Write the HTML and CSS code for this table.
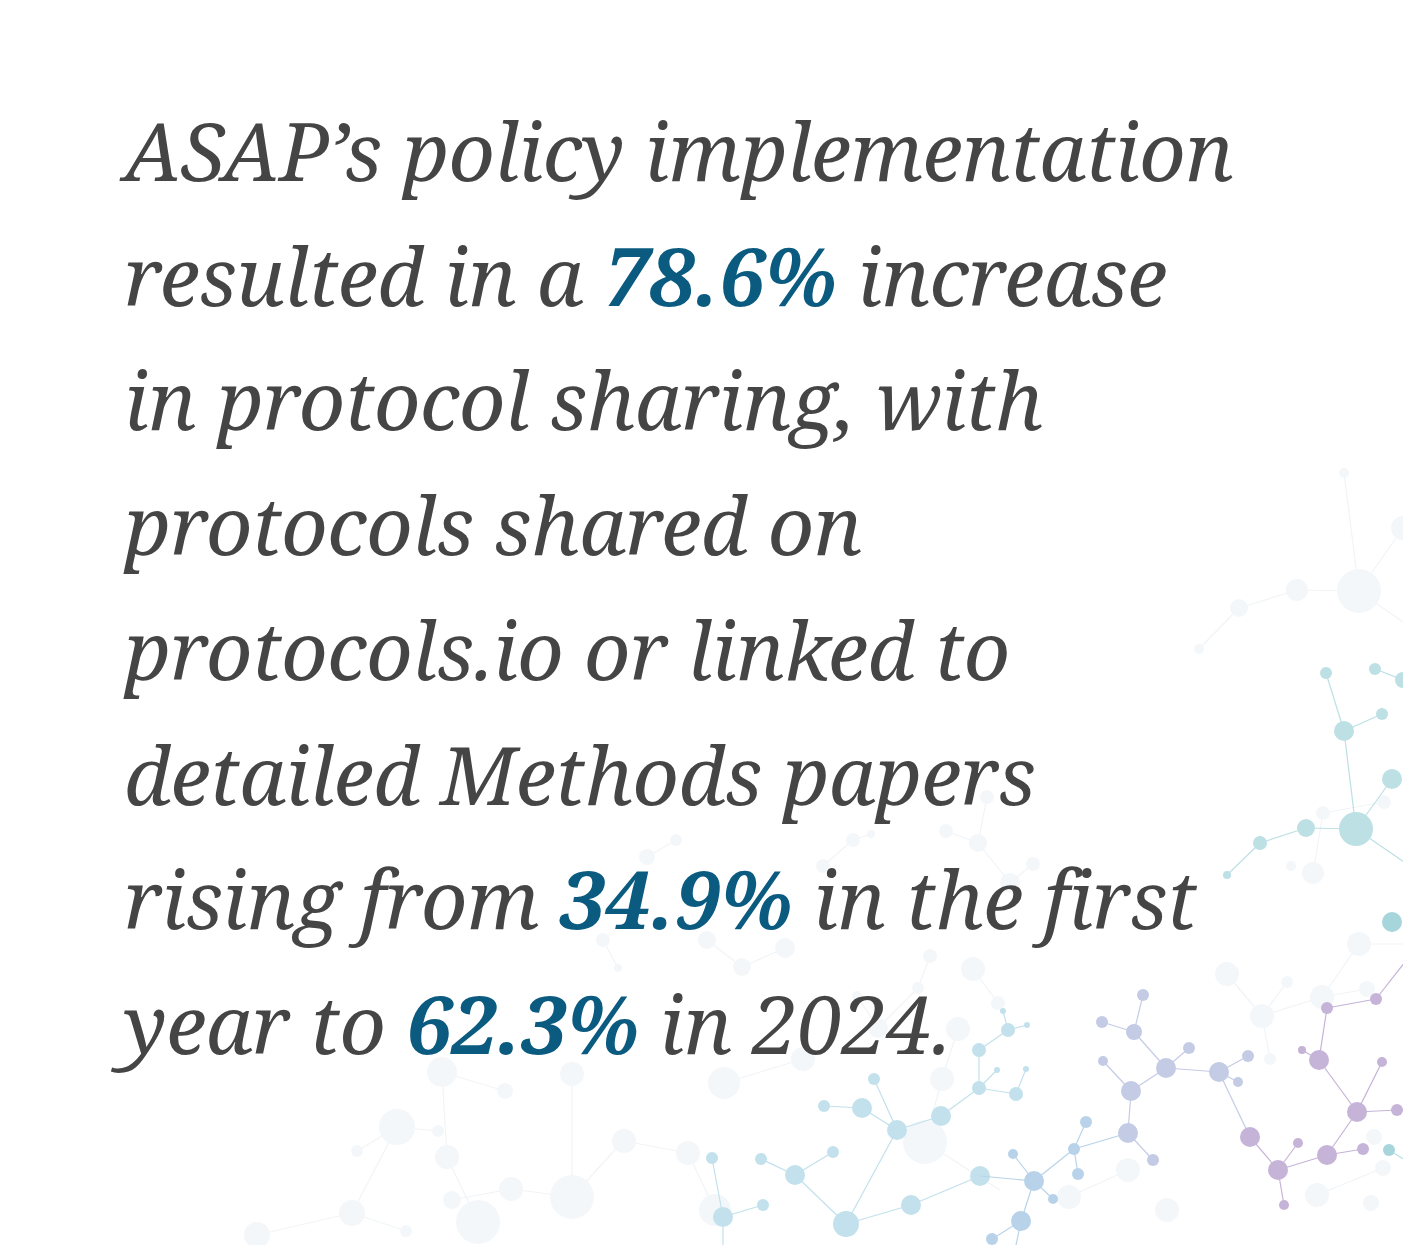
FILE: index.html
```html
<!DOCTYPE html>
<html lang="en">
<head>
<meta charset="utf-8">
<title>ASAP protocol sharing</title>
<link rel="stylesheet" href="styles.css">
</head>
<body>
<main class="card">
  <svg class="network" viewBox="0 0 1403 1245" aria-hidden="true">
    <g class="faint">
      <g class="lines">
        <line x1="1344" y1="473" x2="1359" y2="591"/>
        <line x1="1359" y1="591" x2="1403" y2="528"/>
        <line x1="1359" y1="591" x2="1297" y2="590"/>
        <line x1="1297" y1="590" x2="1239" y2="608"/>
        <line x1="1239" y1="608" x2="1199" y2="649"/>
        <line x1="1359" y1="591" x2="1403" y2="622"/>
        <line x1="987" y1="797" x2="978" y2="843"/>
        <line x1="978" y1="843" x2="946" y2="831"/>
        <line x1="978" y1="843" x2="1010" y2="883"/>
        <line x1="1010" y1="883" x2="1033" y2="864"/>
        <line x1="853" y1="840" x2="871" y2="834"/>
        <line x1="853" y1="840" x2="823" y2="866"/>
        <line x1="647" y1="857" x2="676" y2="840"/>
        <line x1="603" y1="940" x2="618" y2="968"/>
        <line x1="707" y1="940" x2="742" y2="967"/>
        <line x1="742" y1="967" x2="785" y2="948"/>
        <line x1="930" y1="956" x2="918" y2="988"/>
        <line x1="918" y1="988" x2="878" y2="1028"/>
        <line x1="878" y1="1028" x2="857" y2="996"/>
        <line x1="973" y1="969" x2="998" y2="1003"/>
        <line x1="1359" y1="944" x2="1322" y2="997"/>
        <line x1="1359" y1="944" x2="1403" y2="944"/>
        <line x1="1227" y1="974" x2="1262" y2="1016"/>
        <line x1="1262" y1="1016" x2="1287" y2="982"/>
        <line x1="1262" y1="1016" x2="1270" y2="1059"/>
        <line x1="1262" y1="1016" x2="1322" y2="997"/>
        <line x1="1322" y1="997" x2="1367" y2="989"/>
        <line x1="1323" y1="813" x2="1384" y2="802"/>
        <line x1="1323" y1="813" x2="1313" y2="873"/>
        <line x1="958" y1="1029" x2="942" y2="1079"/>
        <line x1="942" y1="1079" x2="925" y2="1142"/>
        <line x1="925" y1="1142" x2="1000" y2="1190"/>
        <line x1="803" y1="1059" x2="724" y2="1083"/>
        <line x1="624" y1="1141" x2="688" y2="1153"/>
        <line x1="688" y1="1153" x2="715" y2="1210"/>
        <line x1="397" y1="1127" x2="438" y2="1131"/>
        <line x1="397" y1="1127" x2="357" y2="1151"/>
        <line x1="397" y1="1127" x2="352" y2="1213"/>
        <line x1="352" y1="1213" x2="406" y2="1231"/>
        <line x1="352" y1="1213" x2="257" y2="1235"/>
        <line x1="442" y1="1072" x2="505" y2="1091"/>
        <line x1="442" y1="1072" x2="447" y2="1157"/>
        <line x1="447" y1="1157" x2="478" y2="1222"/>
        <line x1="572" y1="1074" x2="572" y2="1197"/>
        <line x1="572" y1="1197" x2="624" y2="1140"/>
        <line x1="572" y1="1197" x2="511" y2="1189"/>
        <line x1="511" y1="1189" x2="452" y2="1200"/>
        <line x1="1128" y1="1170" x2="1069" y2="1197"/>
        <line x1="1317" y1="1195" x2="1383" y2="1168"/>
      </g>
      <circle cx="1344" cy="473" r="5"/>
      <circle cx="1359" cy="591" r="22"/>
      <circle cx="1403" cy="528" r="12"/>
      <circle cx="1297" cy="590" r="11"/>
      <circle cx="1239" cy="608" r="9"/>
      <circle cx="1199" cy="649" r="5"/>
      <circle cx="987" cy="797" r="7"/>
      <circle cx="978" cy="843" r="9"/>
      <circle cx="946" cy="831" r="7"/>
      <circle cx="1010" cy="883" r="10"/>
      <circle cx="1033" cy="864" r="7"/>
      <circle cx="853" cy="840" r="7"/>
      <circle cx="871" cy="834" r="4"/>
      <circle cx="823" cy="866" r="7"/>
      <circle cx="647" cy="857" r="8"/>
      <circle cx="676" cy="840" r="6"/>
      <circle cx="603" cy="940" r="7"/>
      <circle cx="618" cy="968" r="4"/>
      <circle cx="707" cy="940" r="9"/>
      <circle cx="742" cy="967" r="9"/>
      <circle cx="785" cy="948" r="10"/>
      <circle cx="930" cy="956" r="7"/>
      <circle cx="918" cy="988" r="6"/>
      <circle cx="878" cy="1028" r="10"/>
      <circle cx="857" cy="996" r="5"/>
      <circle cx="973" cy="969" r="12"/>
      <circle cx="998" cy="1003" r="7"/>
      <circle cx="1359" cy="944" r="12"/>
      <circle cx="1322" cy="997" r="12"/>
      <circle cx="1227" cy="974" r="12"/>
      <circle cx="1262" cy="1016" r="12"/>
      <circle cx="1287" cy="982" r="6"/>
      <circle cx="1270" cy="1059" r="6"/>
      <circle cx="1367" cy="989" r="8"/>
      <circle cx="1323" cy="813" r="7"/>
      <circle cx="1384" cy="802" r="7"/>
      <circle cx="1313" cy="873" r="11"/>
      <circle cx="1291" cy="866" r="5"/>
      <circle cx="958" cy="1029" r="12"/>
      <circle cx="942" cy="1079" r="12"/>
      <circle cx="925" cy="1142" r="22"/>
      <circle cx="803" cy="1059" r="12"/>
      <circle cx="724" cy="1083" r="16"/>
      <circle cx="624" cy="1141" r="12"/>
      <circle cx="688" cy="1153" r="12"/>
      <circle cx="715" cy="1210" r="16"/>
      <circle cx="397" cy="1127" r="18"/>
      <circle cx="438" cy="1131" r="6"/>
      <circle cx="357" cy="1151" r="6"/>
      <circle cx="352" cy="1213" r="13"/>
      <circle cx="406" cy="1231" r="6"/>
      <circle cx="257" cy="1235" r="13"/>
      <circle cx="442" cy="1072" r="15"/>
      <circle cx="505" cy="1091" r="8"/>
      <circle cx="447" cy="1157" r="12"/>
      <circle cx="478" cy="1222" r="22"/>
      <circle cx="572" cy="1074" r="12"/>
      <circle cx="572" cy="1197" r="22"/>
      <circle cx="511" cy="1189" r="12"/>
      <circle cx="452" cy="1200" r="9"/>
      <circle cx="1128" cy="1170" r="12"/>
      <circle cx="1069" cy="1197" r="12"/>
      <circle cx="1167" cy="1210" r="12"/>
      <circle cx="1317" cy="1195" r="12"/>
      <circle cx="1371" cy="1203" r="8"/>
      <circle cx="1374" cy="1137" r="8"/>
      <circle cx="1383" cy="1168" r="8"/>
    </g>

    <g class="teal">
      <g class="lines">
        <line x1="1326" y1="673" x2="1344" y2="731"/>
        <line x1="1344" y1="731" x2="1382" y2="714"/>
        <line x1="1344" y1="731" x2="1356" y2="829"/>
        <line x1="1375" y1="669" x2="1403" y2="680"/>
        <line x1="1356" y1="829" x2="1392" y2="779"/>
        <line x1="1356" y1="829" x2="1306" y2="828"/>
        <line x1="1306" y1="828" x2="1260" y2="843"/>
        <line x1="1260" y1="843" x2="1227" y2="875"/>
        <line x1="1356" y1="829" x2="1410" y2="866"/>
        <line x1="1389" y1="1150" x2="1405" y2="1160"/>
      </g>
      <circle cx="1326" cy="673" r="6"/>
      <circle cx="1344" cy="731" r="10"/>
      <circle cx="1382" cy="714" r="6"/>
      <circle cx="1375" cy="669" r="6"/>
      <circle cx="1403" cy="680" r="8"/>
      <circle cx="1356" cy="829" r="17"/>
      <circle cx="1392" cy="779" r="10"/>
      <circle cx="1306" cy="828" r="9"/>
      <circle cx="1260" cy="843" r="7"/>
      <circle cx="1227" cy="875" r="4"/>
      <circle class="deep" cx="1392" cy="922" r="10"/>
      <circle class="deep" cx="1389" cy="1150" r="6"/>
    </g>

    <g class="sky">
      <g class="lines">
        <line x1="874" y1="1079" x2="897" y2="1130"/>
        <line x1="824" y1="1106" x2="862" y2="1108"/>
        <line x1="862" y1="1108" x2="897" y2="1130"/>
        <line x1="897" y1="1130" x2="941" y2="1116"/>
        <line x1="941" y1="1116" x2="979" y2="1088"/>
        <line x1="979" y1="1088" x2="979" y2="1050"/>
        <line x1="979" y1="1050" x2="1008" y2="1030"/>
        <line x1="979" y1="1088" x2="997" y2="1070"/>
        <line x1="979" y1="1088" x2="1016" y2="1094"/>
        <line x1="1016" y1="1094" x2="1026" y2="1069"/>
        <line x1="1008" y1="1030" x2="1003" y2="1011"/>
        <line x1="1008" y1="1030" x2="1027" y2="1025"/>
        <line x1="897" y1="1130" x2="846" y2="1224"/>
        <line x1="846" y1="1224" x2="911" y2="1205"/>
        <line x1="911" y1="1205" x2="980" y2="1176"/>
        <line x1="846" y1="1224" x2="795" y2="1175"/>
        <line x1="795" y1="1175" x2="761" y2="1159"/>
        <line x1="795" y1="1175" x2="833" y2="1152"/>
        <line x1="723" y1="1217" x2="712" y2="1158"/>
        <line x1="723" y1="1217" x2="763" y2="1205"/>
        <line x1="723" y1="1217" x2="723" y2="1250"/>
      </g>
      <circle cx="874" cy="1079" r="6"/>
      <circle cx="897" cy="1130" r="10"/>
      <circle cx="824" cy="1106" r="6"/>
      <circle cx="862" cy="1108" r="10"/>
      <circle cx="941" cy="1116" r="10"/>
      <circle cx="979" cy="1088" r="7"/>
      <circle cx="979" cy="1050" r="7"/>
      <circle cx="1008" cy="1030" r="7"/>
      <circle cx="997" cy="1070" r="3"/>
      <circle cx="1016" cy="1094" r="7"/>
      <circle cx="1026" cy="1069" r="3"/>
      <circle cx="1003" cy="1011" r="3"/>
      <circle cx="1027" cy="1025" r="3"/>
      <circle cx="846" cy="1224" r="13"/>
      <circle cx="911" cy="1205" r="10"/>
      <circle cx="980" cy="1176" r="10"/>
      <circle cx="795" cy="1175" r="10"/>
      <circle cx="761" cy="1159" r="6"/>
      <circle cx="833" cy="1152" r="6"/>
      <circle cx="723" cy="1217" r="10"/>
      <circle cx="712" cy="1158" r="6"/>
      <circle cx="763" cy="1205" r="6"/>
    </g>

    <g class="blue">
      <g class="lines">
        <line x1="980" y1="1176" x2="1034" y2="1181"/>
        <line x1="1034" y1="1181" x2="1013" y2="1154"/>
        <line x1="1034" y1="1181" x2="1053" y2="1199"/>
        <line x1="1034" y1="1181" x2="1021" y2="1221"/>
        <line x1="1021" y1="1221" x2="992" y2="1239"/>
        <line x1="1021" y1="1221" x2="1015" y2="1250"/>
        <line x1="1034" y1="1181" x2="1074" y2="1149"/>
        <line x1="1074" y1="1149" x2="1086" y2="1122"/>
        <line x1="1074" y1="1149" x2="1078" y2="1174"/>
        <line x1="1074" y1="1149" x2="1128" y2="1133"/>
      </g>
      <circle cx="1034" cy="1181" r="10"/>
      <circle cx="1013" cy="1154" r="5"/>
      <circle cx="1053" cy="1199" r="5"/>
      <circle cx="1021" cy="1221" r="10"/>
      <circle cx="992" cy="1239" r="6"/>
      <circle cx="1074" cy="1149" r="6"/>
      <circle cx="1086" cy="1122" r="6"/>
      <circle cx="1078" cy="1174" r="6"/>
    </g>

    <g class="periwinkle">
      <g class="lines">
        <line x1="1128" y1="1133" x2="1153" y2="1160"/>
        <line x1="1128" y1="1133" x2="1131" y2="1091"/>
        <line x1="1131" y1="1091" x2="1103" y2="1061"/>
        <line x1="1131" y1="1091" x2="1166" y2="1068"/>
        <line x1="1166" y1="1068" x2="1189" y2="1048"/>
        <line x1="1166" y1="1068" x2="1134" y2="1032"/>
        <line x1="1134" y1="1032" x2="1102" y2="1022"/>
        <line x1="1134" y1="1032" x2="1143" y2="995"/>
        <line x1="1166" y1="1068" x2="1219" y2="1072"/>
        <line x1="1219" y1="1072" x2="1248" y2="1056"/>
        <line x1="1219" y1="1072" x2="1238" y2="1082"/>
        <line x1="1219" y1="1072" x2="1250" y2="1137"/>
      </g>
      <circle cx="1128" cy="1133" r="10"/>
      <circle cx="1153" cy="1160" r="6"/>
      <circle cx="1131" cy="1091" r="10"/>
      <circle cx="1103" cy="1061" r="5"/>
      <circle cx="1166" cy="1068" r="10"/>
      <circle cx="1189" cy="1048" r="6"/>
      <circle cx="1134" cy="1032" r="8"/>
      <circle cx="1102" cy="1022" r="6"/>
      <circle cx="1143" cy="995" r="6"/>
      <circle cx="1219" cy="1072" r="10"/>
      <circle cx="1248" cy="1056" r="6"/>
      <circle cx="1238" cy="1082" r="5"/>
    </g>

    <g class="violet">
      <g class="lines">
        <line x1="1250" y1="1137" x2="1278" y2="1170"/>
        <line x1="1278" y1="1170" x2="1298" y2="1143"/>
        <line x1="1278" y1="1170" x2="1284" y2="1205"/>
        <line x1="1278" y1="1170" x2="1327" y2="1155"/>
        <line x1="1327" y1="1155" x2="1363" y2="1149"/>
        <line x1="1327" y1="1155" x2="1357" y2="1112"/>
        <line x1="1357" y1="1112" x2="1397" y2="1110"/>
        <line x1="1397" y1="1110" x2="1405" y2="1110"/>
        <line x1="1357" y1="1112" x2="1382" y2="1062"/>
        <line x1="1357" y1="1112" x2="1319" y2="1060"/>
        <line x1="1319" y1="1060" x2="1302" y2="1050"/>
        <line x1="1319" y1="1060" x2="1327" y2="1008"/>
        <line x1="1327" y1="1008" x2="1376" y2="999"/>
        <line x1="1376" y1="999" x2="1405" y2="962"/>
      </g>
      <circle cx="1250" cy="1137" r="10"/>
      <circle cx="1278" cy="1170" r="10"/>
      <circle cx="1298" cy="1143" r="5"/>
      <circle cx="1284" cy="1205" r="5"/>
      <circle cx="1327" cy="1155" r="10"/>
      <circle cx="1363" cy="1149" r="6"/>
      <circle cx="1357" cy="1112" r="10"/>
      <circle cx="1397" cy="1110" r="6"/>
      <circle cx="1382" cy="1062" r="5"/>
      <circle cx="1319" cy="1060" r="10"/>
      <circle cx="1302" cy="1050" r="4"/>
      <circle cx="1327" cy="1008" r="6"/>
      <circle cx="1376" cy="999" r="6"/>
    </g>
  </svg>

  <p class="quote">ASAP’s policy implementation<br>
resulted in a <strong class="stat">78.6%</strong> increase<br>
in protocol sharing, with<br>
protocols shared on<br>
protocols.io or linked to<br>
detailed Methods papers<br>
rising from <strong class="stat">34.9%</strong> in the first<br>
year to <strong class="stat">62.3%</strong> in 2024.</p>
</main>
</body>
</html>
```

FILE: styles.css
```css
html, body {
  margin: 0;
  padding: 0;
  background: #ffffff;
}

.card {
  position: relative;
  width: 1403px;
  height: 1245px;
  overflow: hidden;
  background: #ffffff;
}

.network {
  position: absolute;
  inset: 0;
  width: 1403px;
  height: 1245px;
  z-index: 0;
}

.network .lines line {
  stroke-width: 1.2;
}

.faint circle { fill: #f4f7fa; }
.faint .lines line { stroke: #f1f4f7; }

.teal circle { fill: #bde0e4; }
.teal .lines line { stroke: #bde0e4; }
.teal circle.deep { fill: #a7d5dc; }

.sky circle { fill: #c2e1ec; }
.sky .lines line { stroke: #c2e1ec; }

.blue circle { fill: #b8d3e9; }
.blue .lines line { stroke: #b8d3e9; }

.periwinkle circle { fill: #c4cbe5; }
.periwinkle .lines line { stroke: #c4cbe5; }

.violet circle { fill: #c6b3d8; }
.violet .lines line { stroke: #c6b3d8; }

.quote {
  position: relative;
  z-index: 1;
  margin: 0;
  padding: 88px 0 0 124px;
  white-space: nowrap;
  font-family: "Noto Serif", "DejaVu Serif", "Liberation Serif", serif;
  font-style: italic;
  font-weight: 400;
  font-size: 81px;
  line-height: 124.7px;
  letter-spacing: -0.5px;
  color: #454545;
}

.stat {
  font-weight: 700;
  letter-spacing: 0;
  color: #0b5b80;
}
```
